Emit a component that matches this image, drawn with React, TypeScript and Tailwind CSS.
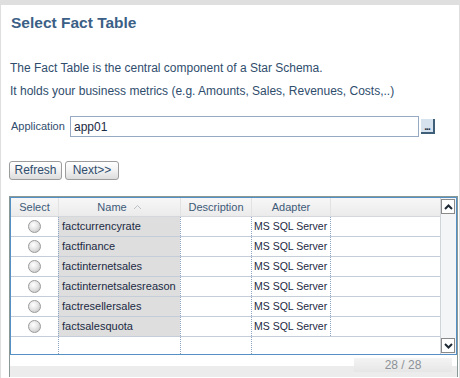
const rows = [
    "factcurrencyrate",
    "factfinance",
    "factinternetsales",
    "factinternetsalesreason",
    "factresellersales",
    "factsalesquota",
];

function Radio() {
    return (
        <span className="block w-[13px] h-[13px] rounded-full border border-[#9a9a9a] bg-[radial-gradient(circle_at_40%_35%,#ffffff_0%,#e6e6e6_45%,#bcbcbc_100%)]" />
    );
}

function Chevron({ up }: { up?: boolean }) {
    return (
        <svg width="9" height="6" viewBox="0 0 9 6">
            <path
                d={up ? "M1 5 L4.5 1.5 L8 5" : "M1 1 L4.5 4.5 L8 1"}
                fill="none"
                stroke="#1e2a36"
                strokeWidth="2"
            />
        </svg>
    );
}

function DataRow({ name }: { name?: string }) {
    return (
        <div className="flex h-[20px] border-b border-[#c5ced8] whitespace-nowrap">
            <div className="w-[47px] flex items-center justify-center">
                {name && <Radio />}
            </div>
            <div className="w-[122px] bg-[#dedede] border-l border-dotted border-[#8fa4c4] pl-[3px] flex items-center">
                {name}
            </div>
            <div className="w-[71px] border-l border-dotted border-[#8fa4c4]" />
            <div className="w-[79px] border-l border-dotted border-[#8fa4c4] pl-[2px] flex items-center text-[10.5px]">
                {name && "MS SQL Server"}
            </div>
            <div className="flex-1 border-l border-dotted border-[#8fa4c4]" />
        </div>
    );
}

export default function App() {
    return (
        <div className="w-[460px] h-[378px] bg-[#dfdfdf] pt-[5px] px-[1px] overflow-hidden font-['Liberation_Sans',Arial,sans-serif] text-[11px]">
            <div className="bg-white h-full pl-[8px] pr-[2px]">
                <h1 className="pt-[9px] pl-[2px] text-[15.5px] font-bold text-[#3b5f86] leading-[18px]">
                    Select Fact Table
                </h1>
                <p className="mt-[29px] pl-[1px] text-[12px] text-[#2f4d6d] leading-[14px]">
                    The Fact Table is the central component of a Star Schema.
                </p>
                <p className="mt-[9px] pl-[1px] text-[12px] text-[#2f4d6d] leading-[14px]">
                    It holds your business metrics (e.g. Amounts, Sales, Revenues, Costs,..)
                </p>
                <div className="mt-[18px] flex items-center h-[21px]">
                    <span className="w-[61px] pl-[2px] text-[11px] text-[#2f4d6d]">Application</span>
                    <div className="w-[349px] h-[21px] border border-[#98a9c4] flex items-center pl-[3px] text-[12px] text-[#1c2a44]">
                        app01
                    </div>
                    <div className="ml-[2px] w-[14px] h-[15px] bg-[#d6e3ee] border-r-2 border-b-2 border-[#3f5f78] text-[10px] leading-[6px] text-[#1c2a44] font-bold flex items-end justify-center pb-[2px] tracking-[-1px]">
                        ...
                    </div>
                </div>
                <div className="mt-[24px] flex gap-[3px]">
                    <button className="h-[19px] w-[53px] rounded-[3px] border border-[#9c9c9c] bg-[linear-gradient(#ffffff,#f2f2f2_50%,#dcdcdc)] text-[12px] text-[#2f4d6d] leading-[17px]">
                        Refresh
                    </button>
                    <button className="h-[19px] w-[54px] rounded-[3px] border border-[#9c9c9c] bg-[linear-gradient(#ffffff,#f2f2f2_50%,#dcdcdc)] text-[12px] text-[#2f4d6d] leading-[17px]">
                        Next&gt;&gt;
                    </button>
                </div>
                <div className="mt-[16px] w-[449px] border border-[#8a9896] border-b-0">
                    <div className="border border-[#5590c4] flex h-[158px]">
                        <div className="flex-1 flex flex-col text-[#1c2a44]">
                            <div className="flex h-[19px] bg-[linear-gradient(#f7f7f7,#ebebeb)] border-b border-[#d4d8dc] text-[#3d5a78] leading-[19px]">
                                <div className="w-[47px] text-center">Select</div>
                                <div className="w-[122px] border-l border-[#e2e2e2] flex items-center justify-center gap-[6px]">
                                    Name
                                    <svg width="9" height="6" viewBox="0 0 9 6">
                                        <path d="M1 5 L4.5 1.5 L8 5" fill="none" stroke="#b8c0c8" strokeWidth="1" />
                                    </svg>
                                </div>
                                <div className="w-[71px] border-l border-[#e2e2e2] text-center">Description</div>
                                <div className="w-[79px] border-l border-[#e2e2e2] text-center">Adapter</div>
                                <div className="flex-1 border-l border-[#e2e2e2]" />
                            </div>
                            {rows.map((r) => (
                                <DataRow key={r} name={r} />
                            ))}
                            <div className="flex flex-1">
                                <div className="w-[47px]" />
                                <div className="w-[122px] border-l border-dotted border-[#8fa4c4]" />
                                <div className="w-[71px] border-l border-dotted border-[#8fa4c4]" />
                                <div className="w-[79px] border-l border-dotted border-[#8fa4c4]" />
                                <div className="flex-1" />
                            </div>
                        </div>
                        <div className="w-[16px] flex flex-col bg-[#f4f5f7] border-l border-[#d0d4d8] py-[1px] pr-[1px]">
                            <div className="h-[15px] bg-white border border-[#8a8a8a] flex items-center justify-center">
                                <Chevron up />
                            </div>
                            <div className="flex-1" />
                            <div className="h-[15px] bg-white border border-[#8a8a8a] flex items-center justify-center">
                                <Chevron />
                            </div>
                        </div>
                    </div>
                    <div className="h-[22px] bg-[linear-gradient(#ffffff_0%,#ffffff_50%,#ececec_50%,#ececec_100%)] flex items-start justify-end pt-[3px] pr-[5px]">
                        <div className="w-[98px] h-[14px] bg-[linear-gradient(#f4f4f4,#e6e6e6)] text-center text-[#8c9298] text-[12px] leading-[14px]">
                            28 / 28
                        </div>
                    </div>
                </div>
            </div>
        </div>
    );
}
